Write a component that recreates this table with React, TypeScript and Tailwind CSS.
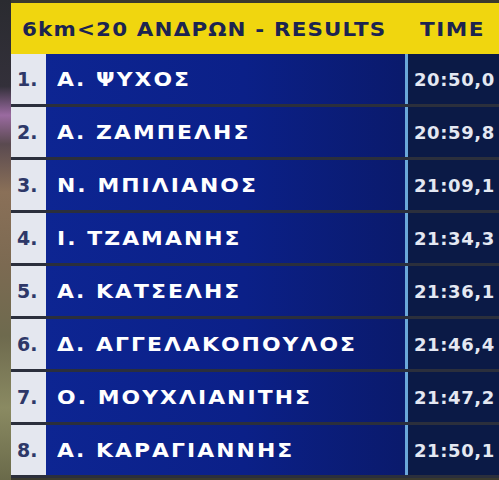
const results = [
  { pos: "1.", name: "Α. ΨΥΧΟΣ", time: "20:50,0" },
  { pos: "2.", name: "Α. ΖΑΜΠΕΛΗΣ", time: "20:59,8" },
  { pos: "3.", name: "Ν. ΜΠΙΛΙΑΝΟΣ", time: "21:09,1" },
  { pos: "4.", name: "Ι. ΤΖΑΜΑΝΗΣ", time: "21:34,3" },
  { pos: "5.", name: "Α. ΚΑΤΣΕΛΗΣ", time: "21:36,1" },
  { pos: "6.", name: "Δ. ΑΓΓΕΛΑΚΟΠΟΥΛΟΣ", time: "21:46,4" },
  { pos: "7.", name: "Ο. ΜΟΥΧΛΙΑΝΙΤΗΣ", time: "21:47,2" },
  { pos: "8.", name: "Α. ΚΑΡΑΓΙΑΝΝΗΣ", time: "21:50,1" },
];

export default function App() {
  return (
    <div className="w-[499px] h-[480px] overflow-hidden flex bg-[#3a3a2e] font-['DejaVu_Sans',sans-serif]">
      {/* blurry stadium strip on the left */}
      <div className="w-[11px] h-full bg-[linear-gradient(180deg,#2a2b30_0%,#33303a_18%,#9a6aa0_24%,#5a4a50_30%,#8a7058_40%,#7c6a52_55%,#6e6a4e_70%,#8a8a62_85%,#6a6a4a_100%)]" />

      <div className="flex-1 flex flex-col pt-[3px]">
        {/* header */}
        <div className="h-[51px] bg-[#f0d60f] flex items-center text-[#1c2450] font-bold text-[20px]">
          <div className="w-[394px] pl-[11px]">
            <span className="inline-block origin-left scale-x-[1.07] tracking-[1.1px] whitespace-nowrap">6km&lt;20 ΑΝΔΡΩΝ - RESULTS</span>
          </div>
          <div className="pl-[15px]">
            <span className="inline-block origin-left scale-x-[1.08] tracking-[1.4px]">TIME</span>
          </div>
        </div>

        {/* rows */}
        {results.map((r) => (
          <div key={r.pos} className="h-[53px] flex border-b-[3px] border-[#2b2f3c]">
            <div className="w-[35px] bg-[#e4e7ef] flex items-center pl-[6px] text-[#2e3868] text-[19px] font-semibold">
              {r.pos}
            </div>
            <div className="w-[359px] bg-[linear-gradient(90deg,#0d2592_0%,#0b2088_55%,#0a1a6c_100%)] flex items-center pl-[11px] text-white font-bold text-[19px]">
              <span className="inline-block origin-left scale-x-[1.15] tracking-[1.8px] whitespace-nowrap">{r.name}</span>
            </div>
            <div className="w-[3px] bg-[#6aa7da]" />
            <div className="flex-1 bg-[#0b1a46] flex items-center pl-[6px] text-[#e4e8f2] font-bold text-[18px] tracking-[0.6px]">
              {r.time}
            </div>
          </div>
        ))}
      </div>
    </div>
  );
}
